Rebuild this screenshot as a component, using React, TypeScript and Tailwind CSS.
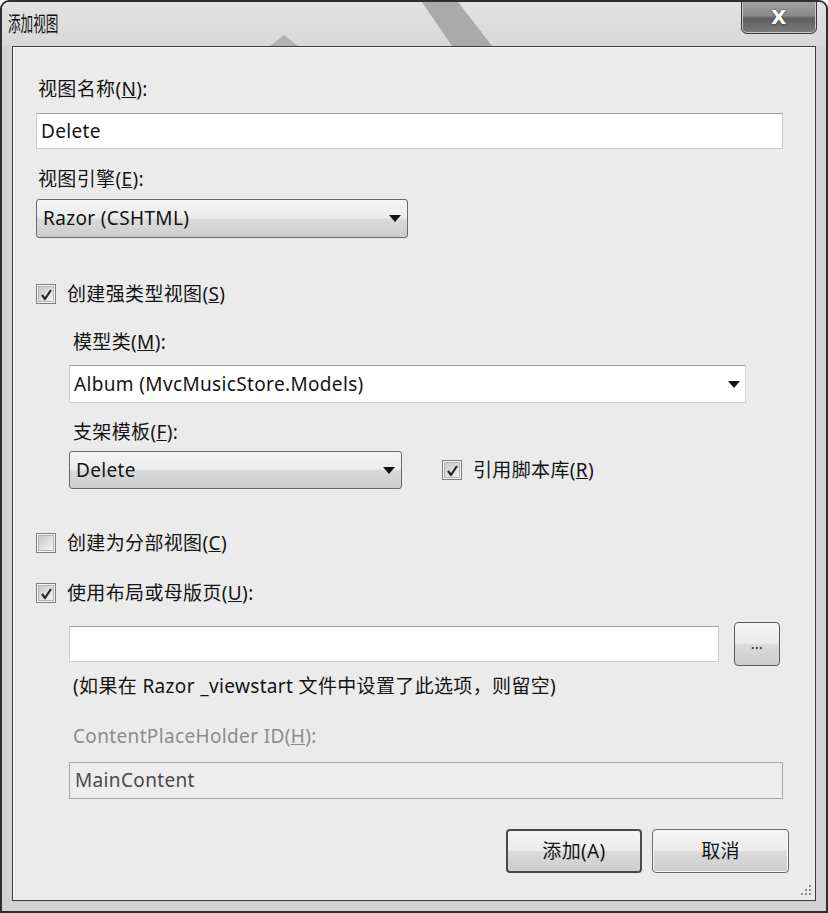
import type { ReactNode } from "react"

// win7 style checkbox
const CheckBox = ({ checked }: { checked: boolean }) => (
  <span className="flex h-[20px] w-[20px] shrink-0 items-center justify-center border border-[#7e7e7e] bg-[#f6f6f6]">
    <span className="flex h-[16px] w-[16px] items-center justify-center border border-[#b4b4b4] bg-[linear-gradient(135deg,#c8c8c8,#f4f4f4)]">
      {checked && (
        <svg width="13" height="13" viewBox="0 0 13 13">
          <path d="M2 7 L5 11 L11 2" stroke="#262626" strokeWidth="2.2" fill="none" strokeLinejoin="round" />
        </svg>
      )}
    </span>
  </span>
)

const Arrow = () => (
  <svg width="12" height="7" viewBox="0 0 12 7" className="shrink-0">
    <path d="M0 0 H12 L6 7 Z" fill="#111" />
  </svg>
)

const Label = ({ children, className = "" }: { children: ReactNode; className?: string }) => (
  <div className={"flex h-[24px] items-center " + className}>{children}</div>
)

const CheckRow = ({ checked, children, className = "" }: { checked: boolean; children: ReactNode; className?: string }) => (
  <div className={"flex h-[24px] items-center gap-[11px] " + className}>
    <CheckBox checked={checked} />
    <span>{children}</span>
  </div>
)

// gradient used by buttons and dropdowns
const btnBg = "bg-[linear-gradient(#f4f4f4,#ececec_48%,#dadada_52%,#cdcdcd)]"

const App = () => {
  return (
    <div className="relative flex h-[913px] w-[828px] flex-col overflow-hidden rounded-t-[9px] border-2 border-[#2e2e2e] bg-[#d2d2d2] font-['Noto_Sans','Noto_Sans_CJK_SC',sans-serif] text-[19px] tracking-[0.35px] text-[#141414]">
      {/* title bar */}
      <div className="relative flex h-[44px] shrink-0 items-start bg-[linear-gradient(#e2e2e2,#d8d8d8)]">
        <svg className="absolute left-0 top-0" width="828" height="44" viewBox="0 0 828 44">
          <polygon points="420,0 456,0 490,44 450,44" fill="#aaaaaa" />
          <polygon points="268,44 282,33 296,44" fill="#b4b4b4" />
        </svg>
        <div className="relative ml-[6px] mt-[9px] origin-left scale-x-60 text-[21px] leading-[24px] tracking-normal text-[#111]">添加视图</div>
        <div className="absolute right-[9px] top-[-2px] flex h-[34px] w-[76px] items-center justify-center rounded-b-[6px] border border-[#3a3a3a] bg-[linear-gradient(#a4a4a4,#8a8a8a_45%,#5e5e5e_55%,#7c7c7c)] shadow-[inset_0_0_0_1px_#c8c8c8]">
          <span className="font-['DejaVu_Sans',sans-serif] text-[20px] font-bold leading-none text-white [text-shadow:0_0_2px_#222]">X</span>
        </div>
      </div>

      {/* client panel */}
      <div className="relative mx-[10px] flex h-[855px] flex-col border border-[#3c3c3c] bg-[#ebebeb] pl-[23px] pr-[32px] shadow-[inset_1px_1px_0_#fafafa]">
        <Label className="mt-[30px] pl-[2px]">
          视图名称(<u>N</u>):
        </Label>
        <div className="mt-[12px] flex h-[36px] items-center border border-[#cdcdcd] border-t-[#9c9c9c] bg-white pl-[4px]">Delete</div>

        <Label className="mt-[18px] pl-[2px]">
          视图引擎(<u>E</u>):
        </Label>
        <div className={"mt-[8px] flex h-[39px] w-[372px] items-center justify-between rounded-[3px] border border-[#6a6a6a] pl-[6px] pr-[6px] " + btnBg}>
          <span>Razor (CSHTML)</span>
          <Arrow />
        </div>

        <CheckRow checked className="mt-[44px]">
          创建强类型视图(<u>S</u>)
        </CheckRow>

        <div className="flex flex-col pl-[33px]">
          <Label className="mt-[24px] pl-[4px]">
            模型类(<u>M</u>):
          </Label>
          <div className="mt-[11px] mr-[37px] flex h-[38px] items-center justify-between border border-[#d0d0d0] border-t-[#a0a0a0] bg-white pl-[4px] pr-[5px]">
            <span>Album (MvcMusicStore.Models)</span>
            <Arrow />
          </div>

          <Label className="mt-[17px] pl-[4px]">
            支架模板(<u>F</u>):
          </Label>
          <div className="mt-[7px] flex items-center gap-[40px]">
            <div className={"flex h-[38px] w-[333px] items-center justify-between rounded-[3px] border border-[#6a6a6a] pl-[6px] pr-[6px] " + btnBg}>
              <span>Delete</span>
              <Arrow />
            </div>
            <CheckRow checked className="gap-[10px]">
              引用脚本库(<u>R</u>)
            </CheckRow>
          </div>
        </div>

        <CheckRow checked={false} className="mt-[42px]">
          创建为分部视图(<u>C</u>)
        </CheckRow>
        <CheckRow checked className="mt-[26px]">
          使用布局或母版页(<u>U</u>):
        </CheckRow>

        <div className="flex flex-col pl-[33px]">
          <div className="mt-[17px] flex h-[44px] items-center gap-[15px]">
            <div className="h-[36px] w-[650px] border border-[#d0d0d0] border-t-[#a0a0a0] bg-white" />
            <div className={"flex h-[44px] w-[46px] items-center justify-center rounded-[4px] border border-[#5a5a5a] text-[14px] leading-none " + btnBg}>
              ...
            </div>
          </div>
          <Label className="mt-[8px] pl-[4px]">(如果在 Razor _viewstart 文件中设置了此选项，则留空)</Label>
          <Label className="mt-[26px] pl-[4px] text-[#8c8c8c]">
            ContentPlaceHolder ID(<u>H</u>):
          </Label>
          <div className="mt-[14px] flex h-[37px] items-center border border-[#a6a6a6] bg-[#ededed] pl-[5px] text-[#4a4a4a]">MainContent</div>
        </div>

        <div className="mt-[30px] flex justify-end gap-[10px]">
          <div className={"flex h-[44px] w-[136px] items-center justify-center rounded-[4px] border-2 border-[#4a4a4a] " + btnBg}>添加(A)</div>
          <div className={"mr-[-6px] flex h-[44px] w-[137px] items-center justify-center rounded-[4px] border border-[#6a6a6a] shadow-[inset_0_0_0_1px_#f8f8f8] " + btnBg}>取消</div>
        </div>

        {/* resize grip */}
        <svg className="absolute bottom-[4px] right-[3px]" width="12" height="12" viewBox="0 0 12 12">
          <rect x="9" y="1" width="2" height="2" fill="#8a8a8a" />
          <rect x="5" y="5" width="2" height="2" fill="#8a8a8a" />
          <rect x="9" y="5" width="2" height="2" fill="#8a8a8a" />
          <rect x="1" y="9" width="2" height="2" fill="#8a8a8a" />
          <rect x="5" y="9" width="2" height="2" fill="#8a8a8a" />
          <rect x="9" y="9" width="2" height="2" fill="#8a8a8a" />
        </svg>
      </div>
    </div>
  )
}

export default App
